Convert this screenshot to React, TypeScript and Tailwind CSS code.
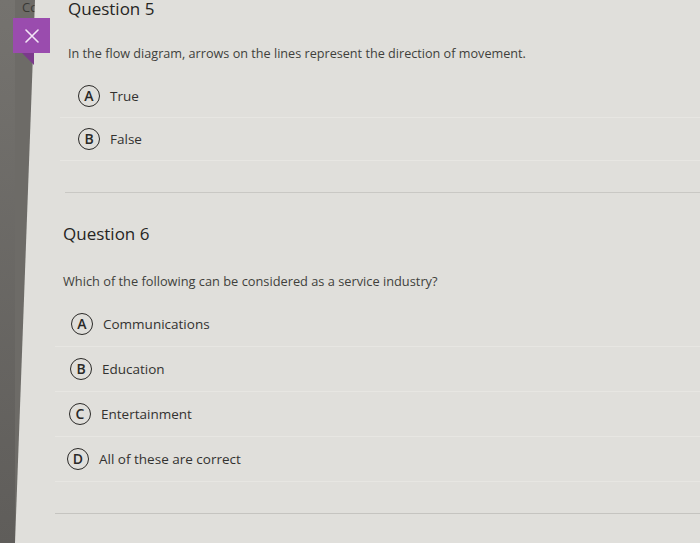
import React from "react";

const font = { fontFamily: '"Open Sans", "Liberation Sans", sans-serif' };

interface OptionProps {
  letter: string;
  label: string;
  shift: number;
  tall?: boolean;
}

const Option: React.FC<OptionProps> = ({ letter, label, shift, tall }) => {
  return (
    <div className={"flex items-center border-b border-[#e7e6e2] " + (tall ? "h-[45px]" : "h-[43px]")}>
      <div className="flex items-center" style={{ marginLeft: shift }}>
        <span className="flex h-[22px] w-[22px] items-center justify-center rounded-full border-[1.8px] border-[#2a2927] text-[14px] font-semibold leading-none text-[#2a2927]">
          {letter}
        </span>
        <span className="ml-[10px] text-[13.5px] font-medium text-[#333230]">{label}</span>
      </div>
    </div>
  );
};

export default function App() {
  return (
    <div className="relative flex h-[543px] w-[700px] overflow-hidden bg-[#6d6b67]" style={font}>
      {/* left dark strip */}
      <div className="relative w-[15px] shrink-0 bg-gradient-to-b from-[#75736f] to-[#5f5d5a]" />
      <span className="absolute left-[22px] top-[-2px] text-[13px] text-[#3a3936]">Cc</span>

      {/* main panel */}
      <div className="relative flex-1 bg-[#e0dfdb] [clip-path:polygon(20px_0,100%_0,100%_100%,0_100%)]">
        <div className="pl-[53px]">
          <div className="mt-[-3px] text-[17px] leading-[24px] text-[#262523]">Question 5</div>
          <div className="mt-[22px] text-[12.65px] leading-[20px] text-[#403f3c]">
            In the flow diagram, arrows on the lines represent the direction of movement.
          </div>
        </div>

        <div className="mt-[12px] pl-[45px]">
          <Option letter="A" label="True" shift={18} />
          <Option letter="B" label="False" shift={18} />
        </div>

        <div className="ml-[50px] mt-[31px] h-px bg-[#c9c8c4]" />

        <div className="pl-[48px]">
          <div className="mt-[29px] text-[17px] leading-[24px] text-[#262523]">Question 6</div>
          <div className="mt-[25px] text-[12.8px] leading-[20px] text-[#403f3c]">
            Which of the following can be considered as a service industry?
          </div>
        </div>

        <div className="mt-[11px] pl-[40px]">
          <Option letter="A" label="Communications" shift={16} tall />
          <Option letter="B" label="Education" shift={15} tall />
          <Option letter="C" label="Entertainment" shift={14} tall />
          <Option letter="D" label="All of these are correct" shift={12} tall />
        </div>

        <div className="ml-[40px] mt-[31px] h-px bg-[#c5c4c0]" />
      </div>

      {/* close button */}
      <div className="absolute left-[13px] top-[18px]">
        <div className="flex h-[35px] w-[37px] items-center justify-center bg-[#9a4cae]">
          <svg width="14" height="14" viewBox="0 0 14 14" fill="none" stroke="#f3e6f6" strokeWidth="1.6" strokeLinecap="round">
            <path d="M1 1 L13 13 M13 1 L1 13" />
          </svg>
        </div>
        <svg className="ml-[9px]" width="12" height="12" viewBox="0 0 12 12">
          <path d="M0 0 L12 0 L12 12 Z" fill="#7b3a8c" />
        </svg>
      </div>
    </div>
  );
}
